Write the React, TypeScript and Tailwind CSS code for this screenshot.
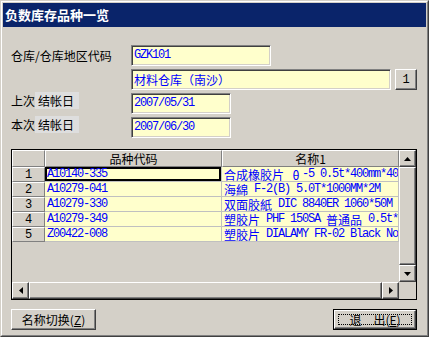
import React from "react";

const CJK = /([\u0370-\u03ff\u2e80-\u9fff\uff00-\uffef]+)/;
const GREEK = /[\u0370-\u03ff]/;

const cjkFont = "font-['Noto_Sans_CJK_SC',sans-serif]";
const monoFont = "font-['Liberation_Mono',monospace]";

function Txt({ s }: { s: string }) {
  return (
    <>
      {s.split(CJK).map((p, i) =>
        p === "" ? null : CJK.test(p) ? (
          GREEK.test(p) ? (
            <span key={i} className={`${cjkFont} text-[12px] inline-block leading-[13px] w-[12px] text-center`}>
              {p}
            </span>
          ) : (
            <span key={i} className={`${cjkFont} text-[12px] inline-block leading-[13px]`}>
              {p}
            </span>
          )
        ) : (
          <span key={i} className={`${monoFont} text-[12px] tracking-[-1.2px] inline-block leading-[13px]`}>
            {p}
          </span>
        )
      )}
    </>
  );
}

function Field({ value, w }: { value: string; w: string }) {
  return (
    <div
      className={`${w} h-[21px] bg-[#ffffcc] border border-t-[#808080] border-l-[#808080] border-r-white border-b-white shadow-[inset_1px_1px_0_#404040,inset_-1px_-1px_0_#d4d0c8] flex items-center pl-[2px] text-[#0000ff] whitespace-pre leading-[13px]`}
    >
      <Txt s={value} />
    </div>
  );
}

function Arrow({ dir }: { dir: "up" | "down" | "left" | "right" }) {
  const pts = {
    up: "0,4 7,4 3.5,0",
    down: "0,0 7,0 3.5,4",
    left: "4,0 4,7 0,3.5",
    right: "0,0 0,7 4,3.5",
  }[dir];
  const vert = dir === "up" || dir === "down";
  return (
    <svg width={vert ? 7 : 4} height={vert ? 4 : 7} viewBox={vert ? "0 0 7 4" : "0 0 4 7"}>
      <polygon points={pts} fill="#000" />
    </svg>
  );
}

const raised =
  "bg-[#d4d0c8] border border-t-white border-l-white border-r-[#404040] border-b-[#404040] shadow-[inset_-1px_-1px_0_#808080]";
const cellRaised =
  "bg-[#d4d0c8] border border-t-white border-l-white border-r-[#808080] border-b-[#808080]";

const rows = [
  ["A10140-335", "合成橡胶片 θ-5 0.5t*400mm*40"],
  ["A10279-041", "海綿 F-2(B) 5.0T*1000MM*2M"],
  ["A10279-330", "双面胶紙 DIC 8840ER 1060*50M"],
  ["A10279-349", "塑胶片 PHF 150SA 普通品 0.5t*"],
  ["Z00422-008", "塑胶片 DIALAMY FR-02 Black No"],
];

export default function App() {
  return (
    <div
      className={`w-[429px] h-[337px] bg-[#d4d0c8] border border-t-[#d4d0c8] border-l-[#d4d0c8] border-r-[#404040] border-b-[#404040] ${cjkFont} text-[12px] text-black`}
    >
      <div className="h-full border border-t-white border-l-white border-r-[#808080] border-b-[#808080] p-px flex flex-col">
        <div className="h-[24px] bg-[#0a246a] text-white font-bold text-[13px] pl-[2px] flex items-center">
          负数库存品种一览
        </div>

        <div className="pl-[8px] flex flex-col">
          <div className="mt-[18px] flex flex-col gap-[3px]">
            <div className="flex items-center h-[21px]">
              <div className="w-[120px]">仓库/仓库地区代码</div>
              <Field value="GZK101" w="w-[140px]" />
            </div>
            <div className="flex items-center h-[21px]">
              <div className="w-[120px]" />
              <Field value="材料仓库（南沙）" w="w-[260px]" />
              <div className={`${raised} ml-[4px] w-[22px] h-[21px] flex items-center justify-center ${monoFont} text-[12px]`}>
                1
              </div>
            </div>
            <div className="flex items-center h-[21px]">
              <div className="w-[120px] flex items-center -mt-[6px]">
                <span>上次</span>
                <span className="bg-[#dedede] h-[17px] pl-[3px] pr-[5px] flex items-center">结帐日</span>
              </div>
              <Field value="2007/05/31" w="w-[100px]" />
            </div>
            <div className="flex items-center h-[21px]">
              <div className="w-[120px] flex items-center -mt-[6px]">
                <span>本次</span>
                <span className="bg-[#dedede] h-[17px] pl-[3px] pr-[5px] flex items-center">结帐日</span>
              </div>
              <Field value="2007/06/30" w="w-[100px]" />
            </div>
          </div>

          <div className="mt-[11px] w-[406px] h-[151px] border border-black flex flex-col">
            <div className="flex h-[132px]">
              <div className="w-[387px] overflow-hidden flex flex-col">
                <div className="flex h-[17px] shrink-0">
                  <div className={`${cellRaised} w-[33px] shrink-0`} />
                  <div className={`${cellRaised} w-[177px] shrink-0 flex items-center justify-center`}>品种代码</div>
                  <div className={`${cellRaised} w-[177px] shrink-0 flex items-center justify-center`}>名称1</div>
                </div>
                {rows.map(([code, name], i) => (
                  <div key={code} className="flex h-[15px] shrink-0">
                    <div className={`${cellRaised} w-[33px] shrink-0 flex items-center justify-center ${monoFont} text-[12px] leading-none`}>
                      {i + 1}
                    </div>
                    <div
                      className={`w-[177px] shrink-0 bg-[#ffffcc] border-r border-b border-[#c0c0c0] pl-[2px] flex items-center whitespace-pre overflow-hidden text-[#0000ff] leading-[13px] ${
                        i === 0 ? "shadow-[inset_0_0_0_2px_#000]" : ""
                      }`}
                    >
                      <Txt s={code} />
                    </div>
                    <div className="w-[177px] shrink-0 bg-[#ffffcc] border-r border-b border-[#c0c0c0] pl-[2px] flex items-center whitespace-pre overflow-hidden text-[#0000ff] leading-[13px]">
                      <Txt s={name} />
                    </div>
                  </div>
                ))}
              </div>
              <div className="w-[17px] flex flex-col">
                <div className={`${raised} h-[17px] flex items-center justify-center`}>
                  <Arrow dir="up" />
                </div>
                <div className={`${raised} flex-1`} />
                <div className={`${raised} h-[17px] flex items-center justify-center`}>
                  <Arrow dir="down" />
                </div>
              </div>
            </div>
            <div className="flex h-[17px]">
              <div className="w-[387px] flex">
                <div className={`${raised} w-[17px] flex items-center justify-center`}>
                  <Arrow dir="left" />
                </div>
                <div className={`${raised} flex-1`} />
                <div className={`${raised} w-[17px] flex items-center justify-center`}>
                  <Arrow dir="right" />
                </div>
              </div>
              <div className="w-[17px] bg-[#d4d0c8]" />
            </div>
          </div>

          <div className="mt-[9px] flex justify-between w-[406px]">
            <div className={`${raised} w-[85px] h-[21px] flex items-center justify-center`}>
              名称切换(<span className="underline">Z</span>)
            </div>
            <div className="w-[84px] h-[21px] border border-black">
              <div className={`${raised} h-full p-[3px]`}>
                <div className="h-full border border-dotted border-black flex items-center justify-center">
                  退　出(<span className="underline">E</span>)
                </div>
              </div>
            </div>
          </div>
        </div>
      </div>
    </div>
  );
}
